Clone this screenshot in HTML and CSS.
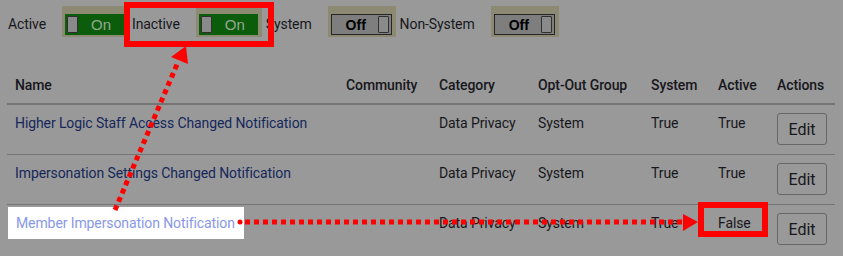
FILE: index.html
```html
<!DOCTYPE html>
<html lang="en">
<head>
    <meta charset="UTF-8">
    <meta name="viewport" content="width=device-width, initial-scale=1.0">
    <title>Notification Settings</title>
    <link rel="stylesheet" href="styles.css">
</head>
<body>
<div class="page">

    <!-- Filters -->
    <div class="filters">
        <span class="filter-label">Active</span>
        <span class="toggle-wrap"><span class="toggle on"><span class="knob"></span>On</span></span>
        <span class="filter-label">Inactive</span>
        <span class="toggle-wrap"><span class="toggle on"><span class="knob"></span>On</span></span>
        <span class="filter-label">System</span>
        <span class="toggle-wrap"><span class="toggle off">Off<span class="knob"></span></span></span>
        <span class="filter-label">Non-System</span>
        <span class="toggle-wrap"><span class="toggle off">Off<span class="knob"></span></span></span>
    </div>

    <!-- Notifications table -->
    <table class="grid">
        <colgroup>
            <col class="c-name">
            <col class="c-community">
            <col class="c-category">
            <col class="c-group">
            <col class="c-system">
            <col class="c-active">
            <col class="c-actions">
        </colgroup>
        <thead>
        <tr>
            <th>Name</th>
            <th>Community</th>
            <th>Category</th>
            <th>Opt-Out Group</th>
            <th>System</th>
            <th>Active</th>
            <th>Actions</th>
        </tr>
        </thead>
        <tbody>
        <tr>
            <td><a href="#">Higher Logic Staff Access Changed Notification</a></td>
            <td></td>
            <td>Data Privacy</td>
            <td>System</td>
            <td>True</td>
            <td>True</td>
            <td><button class="btn">Edit</button></td>
        </tr>
        <tr>
            <td><a href="#">Impersonation Settings Changed Notification</a></td>
            <td></td>
            <td>Data Privacy</td>
            <td>System</td>
            <td>True</td>
            <td>True</td>
            <td><button class="btn">Edit</button></td>
        </tr>
        <tr>
            <td><a href="#" class="spotlight">Member Impersonation Notification</a></td>
            <td></td>
            <td>Data Privacy</td>
            <td>System</td>
            <td>True</td>
            <td>False</td>
            <td><button class="btn">Edit</button></td>
        </tr>
        </tbody>
    </table>
</div>

<!-- Annotation layer -->
<svg class="annotations" width="843" height="256" viewBox="0 0 843 256">
    <rect x="127" y="5" width="144" height="39" fill="none" stroke="#ff0000" stroke-width="6"/>
    <rect x="701" y="205" width="64" height="29" fill="none" stroke="#ff0000" stroke-width="6"/>
    <line x1="115" y1="210" x2="178" y2="62" stroke="#ff0000" stroke-width="5" stroke-dasharray="5 4"/>
    <polygon points="186,46 171,57 188,64" fill="#ff0000"/>
    <circle cx="240" cy="222" r="2.5" fill="#ff0000"/>
    <line x1="245" y1="222" x2="684" y2="222" stroke="#ff0000" stroke-width="5" stroke-dasharray="5 4"/>
    <polygon points="683,214 698,222 683,231" fill="#ff0000"/>
</svg>
</body>
</html>
```

FILE: styles.css
```css
:root {
    --page: #999999;
    --text: #17171c;
    --link: #16275b;
    --line: #747474;
    --red: #ff0000;
}

body {
    font-family: Roboto, "Open Sans", sans-serif;
    font-size: 14px;
    letter-spacing: -0.1px;
    background: var(--page);
    color: var(--text);
    margin: 0;
    line-height: 20px;
}

.page {
    padding: 6px 8px 0 7px;
}

/* Filters */

.filters {
    display: flex;
    align-items: flex-end;
    margin-bottom: 30px;
}

.filter-label {
    line-height: 21px;
    margin: 0 16px 2px 1px;
    font-size: 14px;
}

.toggle-wrap {
    display: inline-flex;
    background: #8d8a74;
    padding: 8px 4px 2px 3px;
    margin-right: 3px;
}

.toggle {
    display: flex;
    align-items: center;
    width: 59px;
    height: 21px;
    box-sizing: border-box;
    font-family: "Liberation Sans", Arial, sans-serif;
    font-size: 14px;
    letter-spacing: 0;
    padding: 0 2px;
}

.toggle.on {
    background: #0b5c0b;
    color: #93a893;
    font-size: 15px;
    gap: 13px;
}

.toggle.off {
    background: #7e7e7e;
    border: 1px solid #262626;
    color: #000;
    font-weight: bold;
    justify-content: space-between;
    padding-left: 14px;
    width: 61px;
}

.knob {
    width: 9px;
    height: 15px;
    background: #8a8a8a;
    border: 1px solid #303030;
    border-radius: 1px;
}

/* Table */

.grid {
    width: 828px;
    border-collapse: collapse;
    table-layout: fixed;
}

.c-name { width: 331px; }
.c-community { width: 93px; }
.c-category { width: 99px; }
.c-group { width: 113px; }
.c-system { width: 67px; }
.c-active { width: 59px; }
.c-actions { width: 66px; }

.grid th {
    text-align: left;
    font-weight: 500;
    padding: 8px;
    vertical-align: bottom;
    border-bottom: 2px solid var(--line);
    white-space: nowrap;
}

.grid td {
    padding: 8px 8px 9px;
    vertical-align: top;
    border-bottom: 1px solid var(--line);
    white-space: nowrap;
}

.grid tbody tr:last-child td {
    border-bottom: none;
}

.grid a {
    color: var(--link);
    text-decoration: none;
}

.grid a.spotlight {
    display: inline-block;
    background: #ffffff;
    color: #8898e8;
    padding: 6px 9px 6px 8px;
    margin: -6px 0 0 -7px;
}

.btn {
    width: 50px;
    height: 32px;
    background: transparent;
    border: 1px solid #676767;
    border-radius: 3px;
    font-family: inherit;
    font-size: 16px;
    color: var(--text);
    padding: 0;
}

/* Annotations */

.annotations {
    position: absolute;
    top: 0;
    left: 0;
    pointer-events: none;
}
```
